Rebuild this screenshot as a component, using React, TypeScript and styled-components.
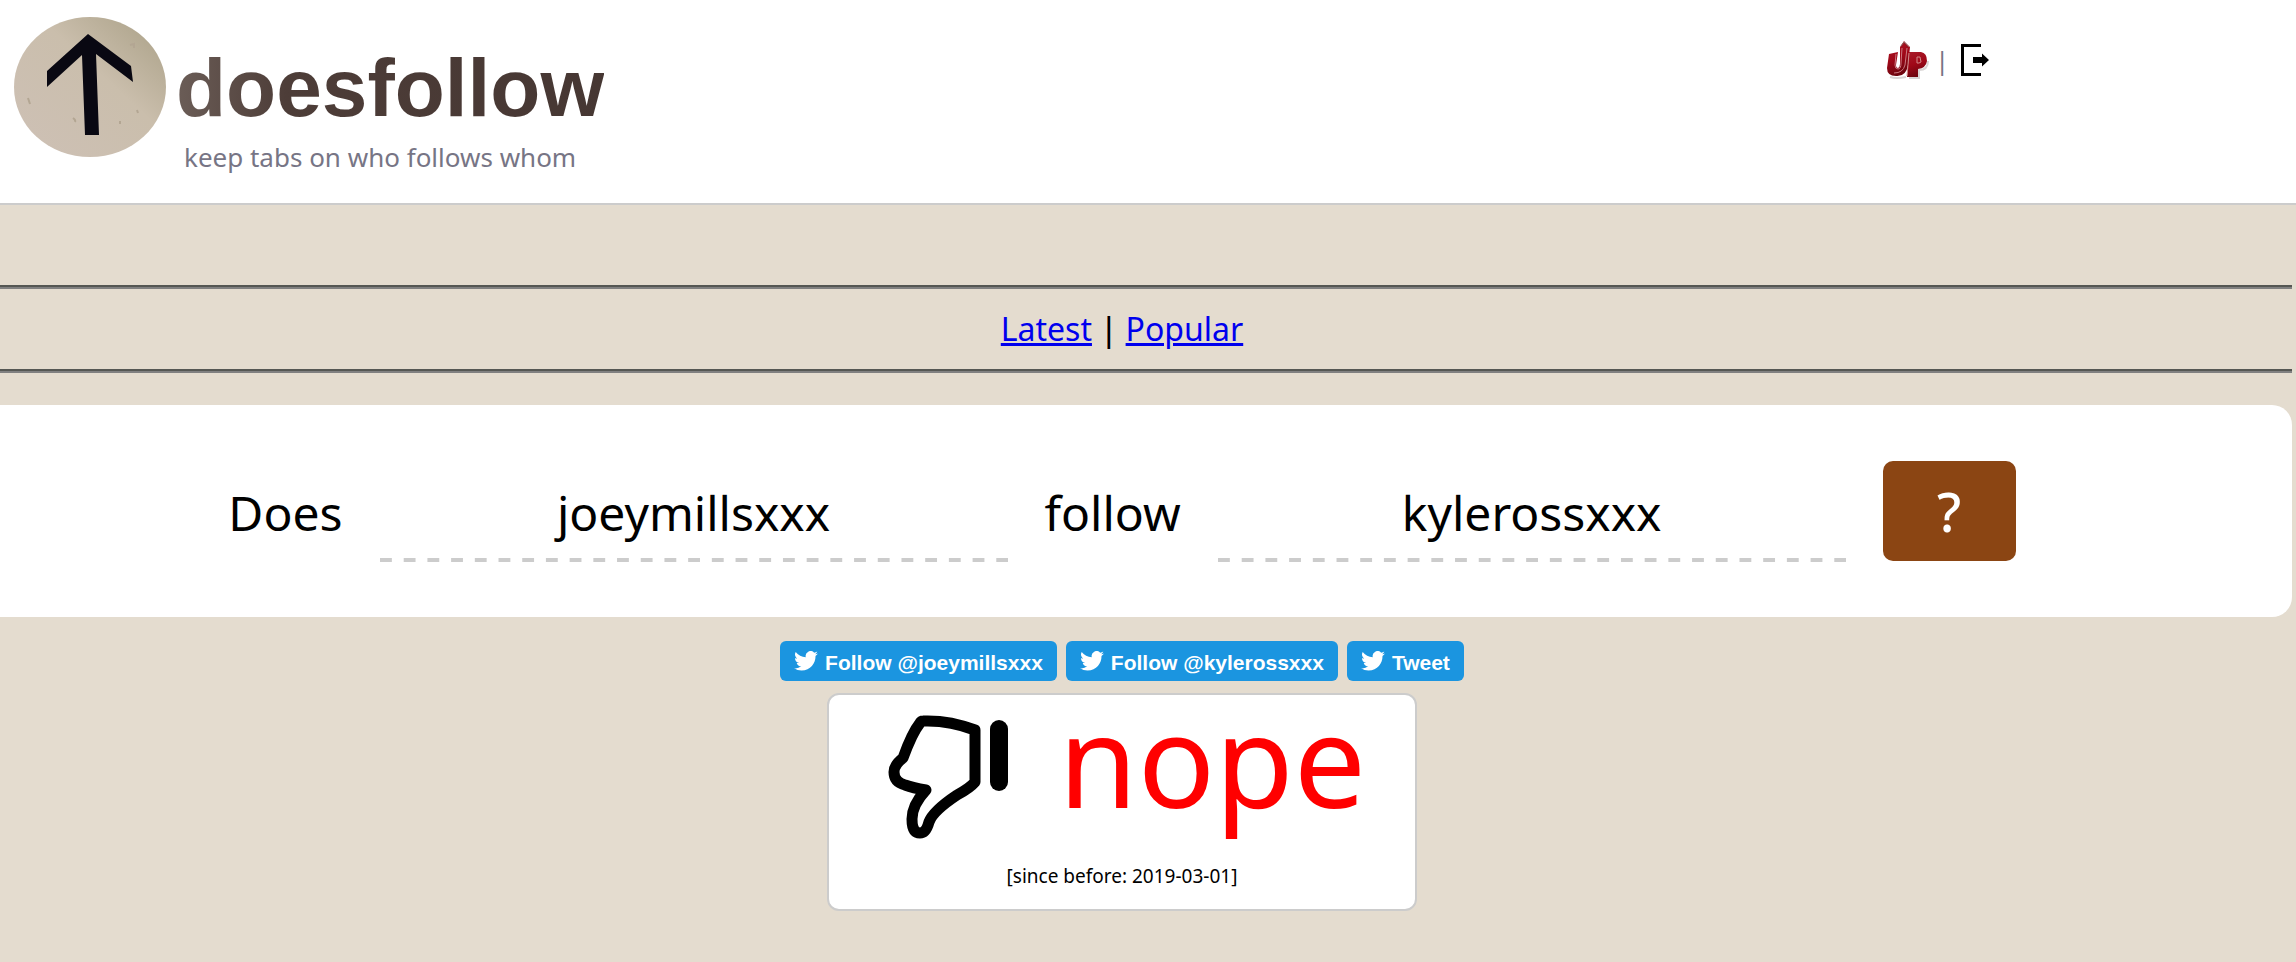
import React from "react";
import styled, { createGlobalStyle } from "styled-components";

const GlobalStyle = createGlobalStyle`
  *, *::before, *::after { box-sizing: border-box; }
  html { background: #e4dccf; }
  body {
    margin: 0;
    overflow-x: hidden;
    font-family: "Noto Sans", "Open Sans", sans-serif;
    color: #000;
  }
`;

const Header = styled.header`
  display: flex;
  justify-content: space-between;
  align-items: flex-start;
  background: #fff;
  border-bottom: 2px solid #ccc;
  padding: 14px 307px 23px 12px;
`;

const Brand = styled.div`
  display: grid;
  grid-template-columns: 156px auto;
  column-gap: 8px;
`;

const Emblem = styled.svg`
  display: block;
  width: 156px;
  height: 146px;
`;

const BrandText = styled.div`
  display: flex;
  flex-direction: column;
  padding-top: 30px;
`;

const Wordmark = styled.h1`
  margin: 0;
  font: bold 82px/88px "Liberation Sans", Arial, sans-serif;
  color: transparent;
  background: linear-gradient(90deg, #6b5d57 0, #4d3d38 110px, #463733 100%);
  background-clip: text;
`;

const Tagline = styled.p`
  margin: 2px 0 0;
  padding-left: 8px;
  font-size: 26px;
  line-height: 46px;
  color: #777585;
`;

const Account = styled.nav`
  display: flex;
  align-items: center;
  gap: 12px;
  padding-top: 24px;
  font-size: 26px;
  line-height: 44px;
  color: #777585;
  a { display: block; }
  svg { display: block; }
`;

const Divider = styled.span`
  width: 14px;
  margin-left: -6px;
`;

const Main = styled.main`
  margin: 80px 4px 0 -48px;
`;

const Rule = styled.hr`
  height: 4px;
  margin: 0;
  border: solid;
  border-width: 2px 0;
  border-color: #555753 transparent #808080;
`;

const Tabs = styled.nav`
  display: flex;
  justify-content: center;
  gap: 8px;
  font-size: 32px;
  line-height: 80px;
  a { color: #0000ee; }
  span { font-weight: 500; }
`;

const Query = styled.form`
  display: flex;
  justify-content: center;
  align-items: center;
  gap: 37px;
  height: 212px;
  margin-top: 32px;
  background: #fff;
  border-radius: 20px;
  font-size: 48px;
`;

const NameField = styled.input`
  width: 628px;
  height: 102px;
  padding: 2px 0 0;
  border: 0;
  outline: 0;
  text-align: center;
  font: inherit;
  color: #000;
  background: linear-gradient(90deg, #ccc 50%, transparent 50%) 0 100% / calc((100% + 12px) / 27) 4px repeat-x;
`;

const Word = styled.label`
  padding-top: 4px;
  line-height: 66px;
`;

const Ask = styled.button`
  width: 133px;
  height: 100px;
  padding: 0;
  border: 0;
  border-radius: 10px;
  background: #8b4513;
  color: #fff;
  font: inherit;
  font-size: 54px;
  font-weight: 500;
`;

const Social = styled.div`
  display: flex;
  justify-content: center;
  gap: 9px;
  margin-top: 24px;
`;

const SocialButton = styled.a`
  display: flex;
  align-items: center;
  gap: 7px;
  height: 40px;
  padding: 0 14px;
  border-radius: 6px;
  background: #1b95e0;
  color: #fff;
  font: bold 21px/24px "Liberation Sans", Arial, sans-serif;
  text-decoration: none;
  span { padding-top: 3px; }
`;

const Result = styled.section`
  width: 590px;
  height: 218px;
  margin: 12px auto 0;
  padding: 0 49px 0 59px;
  border: 2px solid #ccc;
  border-radius: 12px;
  background: #fff;
`;

const Verdict = styled.div`
  display: flex;
  justify-content: space-between;
  height: 156px;
`;

const Thumb = styled.svg`
  width: 122px;
  height: 124px;
  margin-top: 20px;
`;

const Answer = styled.strong`
  font-size: 128px;
  font-weight: 400;
  line-height: 128px;
  color: #f00;
`;

const Since = styled.p`
  margin: 0 -49px 0 -59px;
  text-align: center;
  font-size: 19px;
  line-height: 50px;
`;

const Bird = () => (
  <svg width="24" height="20" viewBox="0 0 24 20" fill="#fff" aria-hidden="true">
    <path d="M24 2.4a9.8 9.8 0 0 1-2.8.8A4.9 4.9 0 0 0 23.3.5a9.8 9.8 0 0 1-3.1 1.2 4.9 4.9 0 0 0-8.4 4.5A14 14 0 0 1 1.7.9a4.9 4.9 0 0 0 1.5 6.6 4.9 4.9 0 0 1-2.2-.6v.1a4.9 4.9 0 0 0 3.9 4.8 4.9 4.9 0 0 1-2.2.1 4.9 4.9 0 0 0 4.6 3.4A9.9 9.9 0 0 1 0 17.3 14 14 0 0 0 7.5 19.5c9.1 0 14-7.5 14-14v-.6A10 10 0 0 0 24 2.4z" />
  </svg>
);

const PencilUp = () => (
  <svg width="42" height="38" viewBox="0 0 42 38" role="img" aria-label="UP">
    <defs>
      <linearGradient id="red" x1="0" y1="0" x2="0.3" y2="1">
        <stop offset="0" stopColor="#a81c2a" />
        <stop offset="0.55" stopColor="#a00818" />
        <stop offset="1" stopColor="#6e040e" />
      </linearGradient>
    </defs>
    <path d="M3 36Q9 38 19 36M22 37H32V29Q41 29 41 20" fill="none" stroke="#d8d4d4" strokeWidth="2" />
    <path d="M2 13L11 11L9 24Q9 27 11 27Q13 26 13 23L13 6L17 0L23 6L21 24Q19 36 9 35Q0 35 0 27Z" fill="url(#red)" />
    <path d="M14 5L17 1L22 6" fill="none" stroke="#8a6560" strokeWidth="1" />
    <path d="M9 13L8 24Q8 28 11 28Q14 28 14 22L15 7M20 7L18 24Q16 32 7 32" fill="none" stroke="#cc7880" strokeWidth="1" />
    <path d="M22 11H34Q40 12 40 20Q39 27 31 28V36H20Z" fill="url(#red)" />
    <path d="M22 12L20 35M30 16H33L34 21L32 22H30Z" fill="none" stroke="#d08a8a" strokeWidth="1" />
  </svg>
);

const LogOut = () => (
  <svg width="28" height="32" viewBox="0 0 28 32" aria-hidden="true">
    <path d="M20 1.5H1.500v29H20" fill="none" stroke="#000" strokeWidth="3" />
    <path d="M12 13h9V9.500l7 6.500-7 6.500V19h-9z" fill="#000" />
  </svg>
);

export default function App() {
  return (
    <>
      <GlobalStyle />
      <Header>
        <Brand>
          <Emblem viewBox="0 0 156 146" aria-hidden="true">
            <defs>
              <linearGradient id="stone" x1="0.1" y1="0.9" x2="0.9" y2="0.1">
                <stop offset="0" stopColor="#cdc0b4" />
                <stop offset="0.6" stopColor="#cabeac" />
                <stop offset="1" stopColor="#b0a68e" />
              </linearGradient>
            </defs>
            <ellipse cx="78" cy="73" rx="76" ry="70" fill="url(#stone)" />
            <path d="M61 104q3 2 2 4M118 31l4-1v4M16 84l2 6M125 96l1 3M108 107v3" fill="none" stroke="#b3a693" strokeWidth="2" />
            <path d="M76 20L119 52L121 68L84 40L87 121H73L70 41L35 73V57Z" fill="#090812" />
          </Emblem>
          <BrandText>
            <Wordmark>doesfollow</Wordmark>
            <Tagline>keep tabs on who follows whom</Tagline>
          </BrandText>
        </Brand>
        <Account aria-label="Account">
          <a href="#profile"><PencilUp /></a>
          <Divider>|</Divider>
          <a href="#logout" aria-label="Log out"><LogOut /></a>
        </Account>
      </Header>
      <Main>
        <Rule />
        <Tabs>
          <a href="#latest">Latest</a>
          <span>|</span>
          <a href="#popular">Popular</a>
        </Tabs>
        <Rule />
        <Query>
          <Word htmlFor="follower">Does</Word>
          <NameField id="follower" defaultValue="joeymillsxxx" />
          <Word htmlFor="followed">follow</Word>
          <NameField id="followed" defaultValue="kylerossxxx" />
          <Ask type="button">?</Ask>
        </Query>
        <Social>
          <SocialButton href="#follow-joeymillsxxx"><Bird /><span>Follow @joeymillsxxx</span></SocialButton>
          <SocialButton href="#follow-kylerossxxx"><Bird /><span>Follow @kylerossxxx</span></SocialButton>
          <SocialButton href="#tweet"><Bird /><span>Tweet</span></SocialButton>
        </Social>
        <Result>
          <Verdict>
            <Thumb viewBox="0 0 122 124" aria-hidden="true">
              <path d="M35 6Q61 5 87 15V67Q82 73 69 80Q45 96 41 107Q38 118 32 118Q24 118 24 104Q24 90 38 75Q25 73 17 70Q6 67 6 57Q6 50 15 43Q24 18 32 8Q33 6 35 6Z" fill="none" stroke="#000" strokeWidth="11" strokeLinejoin="round" />
              <rect x="102" y="5" width="18" height="71" rx="9" />
            </Thumb>
            <Answer>nope</Answer>
          </Verdict>
          <Since>[since before: 2019-03-01]</Since>
        </Result>
      </Main>
    </>
  );
}
